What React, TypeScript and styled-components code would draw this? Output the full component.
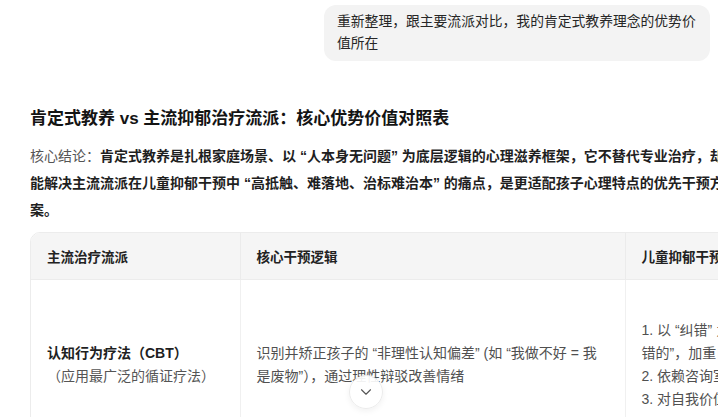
import React from 'react';
import styled, { createGlobalStyle } from 'styled-components';
import { ChevronDown } from 'lucide-react';

const GlobalStyle = createGlobalStyle`
  html,
  body {
    margin: 0;
    padding: 0;
    background: #ffffff;
    overflow: hidden;
  }

  body {
    font-family: 'Liberation Sans', 'Noto Sans CJK SC', sans-serif;
    color: #1f1f1f;
  }
`;

const StyledPage = styled.main`
  position: relative;
  width: 718px;
  height: 417px;
  overflow: hidden;
`;

const StyledThread = styled.div`
  width: 700px;
  padding: 5px 0 0 30px;
  display: flex;
  flex-direction: column;
`;

const StyledUserRow = styled.div`
  display: flex;
  justify-content: flex-end;
  padding-right: 20px;
`;

const StyledBubble = styled.div`
  max-width: 360px;
  padding: 6px 13px;
  background: #f3f3f3;
  border-radius: 12px;
  font-size: 13.8px;
  line-height: 22px;
  color: #262626;
`;

const StyledAnswer = styled.section`
  margin-top: 46px;
  display: flex;
  flex-direction: column;
`;

const StyledTitle = styled.h2`
  margin: 0;
  font-size: 17px;
  line-height: 24px;
  font-weight: 700;
  color: #141414;
`;

const StyledLead = styled.p`
  margin: 12px 0 0;
  font-size: 14px;
  line-height: 27px;
  color: #555555;

  strong {
    font-weight: 700;
    color: #1f1f1f;
  }
`;

const StyledTableWrap = styled.div`
  margin-top: 8px;
  width: 1200px;
  border: 1px solid #ececec;
  border-radius: 10px 10px 0 0;
  overflow: hidden;
`;

const StyledTable = styled.table`
  border-collapse: collapse;
  table-layout: fixed;
  font-size: 14px;
`;

const StyledHeadCell = styled.th<{ $w: number }>`
  box-sizing: border-box;
  width: ${(p) => p.$w}px;
  height: 46px;
  padding: 0 14px 0 16px;
  background: #f5f5f5;
  border-bottom: 1px solid #ececec;
  border-left: 1px solid #ebebeb;
  text-align: left;
  font-size: 13.5px;
  font-weight: 700;
  color: #222222;
  white-space: nowrap;

  &:first-child {
    border-left: none;
  }
`;

const StyledCell = styled.td`
  box-sizing: border-box;
  padding: 16px 14px 16px 16px;
  border-left: 1px solid #f0f0f0;
  vertical-align: middle;
  line-height: 23px;
  color: #505050;

  &:first-child {
    border-left: none;
  }
`;

const StyledSchool = styled.div`
  font-weight: 700;
  color: #1f1f1f;
`;

const StyledNote = styled.div`
  color: #555555;
`;

const StyledScrollButton = styled.button`
  position: absolute;
  left: 349px;
  top: 375px;
  width: 34px;
  height: 34px;
  padding: 0;
  border-radius: 50%;
  border: 1px solid #ececec;
  background: rgba(255, 255, 255, 0.92);
  box-shadow: 0 2px 6px rgba(0, 0, 0, 0.06);
  display: flex;
  align-items: center;
  justify-content: center;
  color: #555555;
  cursor: pointer;
`;

const columns = [
  { title: '主流治疗流派', width: 209 },
  { title: '核心干预逻辑', width: 385 },
  { title: '儿童抑郁干预中的局限', width: 300 },
  { title: '肯定式教养的核心优势', width: 300 },
];

const App = () => {
  return (
    <StyledPage>
      <GlobalStyle />
      <StyledThread>
        <StyledUserRow>
          <StyledBubble>重新整理，跟主要流派对比，我的肯定式教养理念的优势价值所在</StyledBubble>
        </StyledUserRow>
        <StyledAnswer>
          <StyledTitle>肯定式教养 vs 主流抑郁治疗流派：核心优势价值对照表</StyledTitle>
          <StyledLead>
            核心结论：
            <strong>
              肯定式教养是扎根家庭场景、以 “人本身无问题” 为底层逻辑的心理滋养框架，它不替代专业治疗，却能解决主流流派在儿童抑郁干预中 “高抵触、难落地、治标难治本” 的痛点，是更适配孩子心理特点的优先干预方案。
            </strong>
          </StyledLead>
          <StyledTableWrap>
            <StyledTable>
              <thead>
                <tr>
                  {columns.map((c) => (
                    <StyledHeadCell key={c.title} $w={c.width}>
                      {c.title}
                    </StyledHeadCell>
                  ))}
                </tr>
              </thead>
              <tbody>
                <tr>
                  <StyledCell>
                    <StyledSchool>认知行为疗法（CBT）</StyledSchool>
                    <StyledNote>（应用最广泛的循证疗法）</StyledNote>
                  </StyledCell>
                  <StyledCell>
                    识别并矫正孩子的 “非理性认知偏差” (如 “我做不好 = 我是废物”），通过理性辩驳改善情绪
                  </StyledCell>
                  <StyledCell>
                    1. 以 “纠错” 为导向，孩子容易觉得 “我又是错的”，加重自我否定
                    <br />
                    2. 依赖咨询室练习，回家难坚持
                    <br />
                    3. 对自我价值感的修复较慢
                  </StyledCell>
                  <StyledCell>
                    1. 不纠正想法，先接纳感受，孩子没有被评判的压力
                    <br />
                    2. 父母在日常互动中持续给予肯定，练习自然融入生活
                    <br />
                    3. 直接滋养 “我本身就值得被爱” 的核心自我价值
                  </StyledCell>
                </tr>
              </tbody>
            </StyledTable>
          </StyledTableWrap>
        </StyledAnswer>
      </StyledThread>
      <StyledScrollButton aria-label="滚动到底部">
        <ChevronDown size={18} strokeWidth={1.5} />
      </StyledScrollButton>
    </StyledPage>
  );
};

export default App;
